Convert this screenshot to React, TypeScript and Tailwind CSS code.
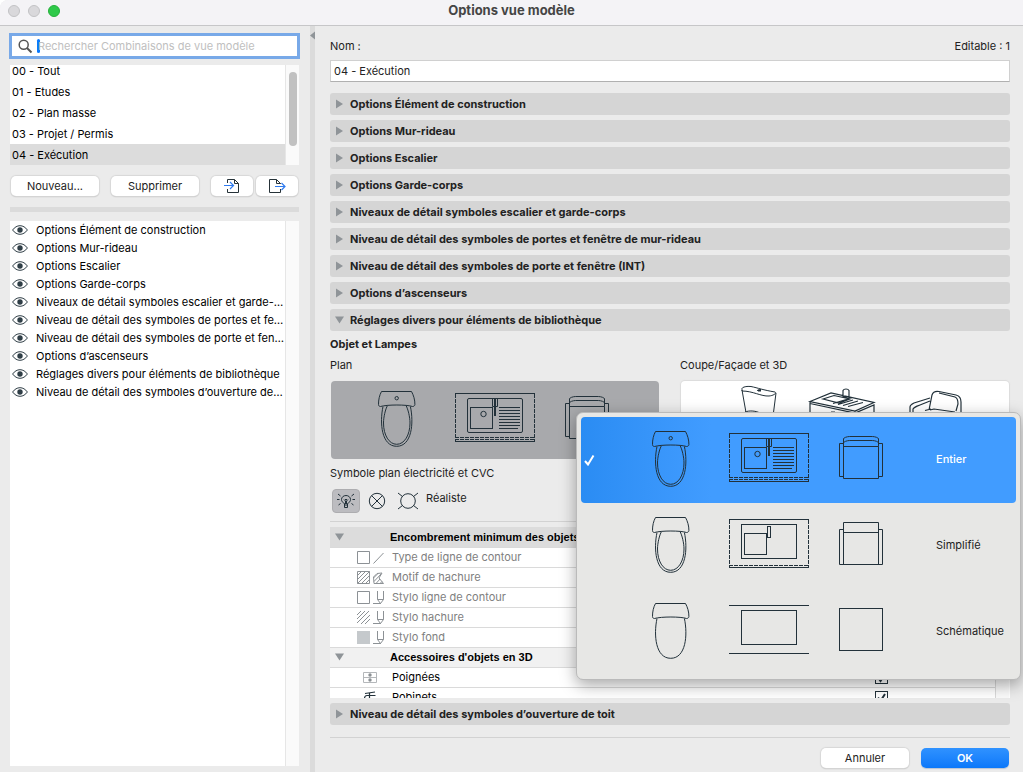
import { useState } from 'react';
import type { ReactNode } from 'react';
import clsx from 'clsx';

type DetailLevel = 'full' | 'simple' | 'schematic';

const COMBINATIONS = ['00 - Tout', '01 - Etudes', '02 - Plan masse', '03 - Projet / Permis', '04 - Exécution'];

const VISIBLE_OPTIONS = [
  'Options Élément de construction',
  'Options Mur-rideau',
  'Options Escalier',
  'Options Garde-corps',
  'Niveaux de détail symboles escalier et garde-…',
  'Niveau de détail des symboles de portes et fe…',
  'Niveau de détail des symboles de porte et fen…',
  'Options d’ascenseurs',
  'Réglages divers pour éléments de bibliothèque',
  'Niveau de détail des symboles d’ouverture de…',
];

const SECTIONS = [
  'Options Élément de construction',
  'Options Mur-rideau',
  'Options Escalier',
  'Options Garde-corps',
  'Niveaux de détail symboles escalier et garde-corps',
  'Niveau de détail des symboles de portes et fenêtre de mur-rideau',
  'Niveau de détail des symboles de porte et fenêtre (INT)',
  'Options d’ascenseurs',
];

const LEVELS: { id: DetailLevel; label: string }[] = [
  { id: 'full', label: 'Entier' },
  { id: 'simple', label: 'Simplifié' },
  { id: 'schematic', label: 'Schématique' },
];

const EyeIcon = () => (
  <svg width="16" height="10" viewBox="0 0 16 10" fill="none" className="shrink-0">
    <path d="M.6 5C2.6 2.2 5.2.7 8 .7S13.400 2.200 15.400 5C13.400 7.800 10.800 9.300 8 9.300S2.600 7.800.6 5Z" stroke="#2f3e46" />
    <circle cx="8" cy="5" r="2.700" fill="#2f3e46" />
  </svg>
);

const ImportIcon = () => (
  <svg width="16" height="16" viewBox="0 0 16 16" fill="none">
    <path d="M3.500 5V1.500H10.500L14.500 5.500V14.500H3.500V11M10.500 1.500V5.500H14.500" stroke="#263238" />
    <path d="M0 7.500H9.500M6 4L9.500 7.500L6 11" stroke="#2f7bf0" strokeWidth="1.200" />
  </svg>
);

const ExportIcon = () => (
  <svg width="18" height="16" viewBox="0 0 18 16" fill="none">
    <path d="M12.500 6V5.500L8.500 1.500H1.500V14.500H12.500V11M8.500 1.500V5.500H12.500" stroke="#263238" />
    <path d="M7 8.500H17M13.500 5L17 8.500L13.500 12" stroke="#2f7bf0" strokeWidth="1.200" />
  </svg>
);

// WC, sink and armchair as seen in plan, at the given level of detail
const PlanSymbols = ({ level }: { level: DetailLevel }) => {
  const full = level === 'full';
  const schematic = level === 'schematic';
  return (
    <svg width="232" height="58" viewBox="0 0 232 58" fill="none" stroke="#22313a" className="shrink-0">
      <path d="M3.500.5H33.500C35.500 4 37 9 36.900 13.500C36.800 15 35.500 15.500 34.500 15.500C29 13.500 9 13.500 2.500 15.500C1.500 15.500.5 15 .5 13.500C.4 9 1.500 4 3.500.5Z" />
      <path d="M5 15.500C1.500 32 3.500 55.300 18.700 55.300C33.900 55.300 35.900 32 32.400 15.500" />
      {!schematic && (
        <path d="M9.500 14.500C7.500 18 5.500 26 5.500 32C5.500 44 11 53.300 18.700 53.300S32 44 32 32C32 26 30 18 28 14.500" />
      )}
      {full && <circle cx="18.700" cy="7.200" r="1.700" />}

      <path d="M77 2.500H157M77 50.500H157" />
      <rect x="89.500" y="7.500" width="55" height="34" rx={full ? 1.500 : 0} />
      {!schematic && (
        <>
          <path d="M77.500 3V50M156.500 3V50" strokeDasharray="4 1" />
          <path d="M77 48.500H157" strokeDasharray="4 1" />
          <rect x="92.500" y="16.500" width="22" height="21" />
        </>
      )}
      {level === 'simple' && <rect x="115.500" y="9.500" width="3" height="11" fill="#e7e7e5" />}
      {full && (
        <>
          <path d="M77 46.500H157" strokeDasharray="4 1" />
          <circle cx="105.500" cy="23" r="2.700" />
          <path d="M114.500 8V15.500H119.500V8" />
          <path d="M117 8V25" strokeWidth="2" />
          <path d="M121 16.500H142M121 19.500H142M121 22.500H142M121 25.500H142M121 28.500H142M121 31.500H142M121 34.500H142M121 37.500H140" />
        </>
      )}

      {full && (
        <>
          <path d="M191.500 12.500H187.500V45.500H191.500M226.500 12.500H230.500V45.500H226.500" />
          <path d="M191.500 15.500H226.500V47.500H191.500V7.500C194 5.500 197 5.500 199 5.500H219C221 5.500 224 5.500 226.500 7.500V15.500M191.500 11.500C194 9.500 197 9.500 199 9.500H219C221 9.500 224 9.500 226.500 11.500" />
        </>
      )}
      {level === 'simple' && (
        <path d="M191.500 12.500H187.500V47.500H230.500V12.500H226.500M191.500 15.500H226.500M191.500 47.500V5.500H226.500V47.500" />
      )}
      {schematic && <rect x="187.500" y="5.500" width="43" height="42" />}
    </svg>
  );
};

const Symbols3D = () => (
  <svg width="328" height="78" viewBox="0 0 328 78" fill="none" stroke="#22313a" className="shrink-0">
    <path d="M61 8.500C60 6 66 5 70 5.500C77 7 82 9 94 11C96 12 93 14.500 88 15C80 15.500 72 10 61 10ZM61 9L65 31.500M95 12L92.500 31.500M64 31C68 29.500 74 29.500 79 32M76 9.500L80 8.500" />
    <path d="M77 9.500H80" strokeWidth="2" />
    <path d="M129 20.500L150 12L193 21.500L174 30ZM129 20.500V60M129 22.500L174 32L193 24V60M174 30V60M142 18L153 14.500L169 18L158 22ZM152 22.500L167 18M157 23.500L172 19M162 24.500L177 20M167 25.500L182 21.500M162 17V9.500C163 7.500 167 7.500 168 9.500V17M159 16H169M150 31H154" strokeWidth="1.200" />
    <path d="M229 32V26C229 24 231 23 233 22L249 17M232 32V28C233 26 236 25 249 20M248 29L251 14C252 11 255 10 258 10.500L275 14C279 15 280 18 280 21V31M249 29L253 28L274 31M258 12L274 16C277 17 277 20 277 23L275 30M244 29.500L250 28" strokeWidth="1.200" />
  </svg>
);

const BulbIcon = () => (
  <svg width="18" height="16" viewBox="0 0 18 16" fill="none" stroke="#22313a">
    <path d="M7.500 12V10.500C5.500 9.500 4.500 8.300 4.500 6.500C4.500 4.200 6.500 2.500 9 2.500S13.500 4.200 13.500 6.500C13.500 8.300 12.500 9.500 10.500 10.500V12M7.500 12H10.500V14.500H7.500ZM7 6.500L8.500 8V11M11 6.500L9.500 8V11M8 6.500H10M1 1L3.500 3M17 1L14.500 3M0 6.500H2.500M18 6.500H15.500M1.500 12L3.500 10.500M16.500 12L14.500 10.500" />
  </svg>
);

const CrossCircleIcon = () => (
  <svg width="18" height="18" viewBox="0 0 18 18" fill="none" stroke="#22313a">
    <circle cx="9" cy="9" r="7.700" />
    <path d="M3.500 3.500L14.500 14.500M14.500 3.500L3.500 14.500" />
  </svg>
);

const CircleRaysIcon = () => (
  <svg width="20" height="18" viewBox="0 0 20 18" fill="none" stroke="#22313a">
    <circle cx="10" cy="9" r="7.300" />
    <path d="M0 1L4.500 4.500M20 1L15.500 4.500M0 17L4.500 13.500M20 17L15.500 13.500" />
  </svg>
);

const PEN = 'M20.500 1V9.500L23.500 13.500L26.500 9.500V1M20.500 9.500H26.500M16 13.500H24';

const ROW_ICONS: Record<string, ReactNode> = {
  line: <path d="M.5 1.500H12.500V13.500H.5ZM16.500 13.500L26.500 3" />,
  pattern: (
    <>
      <path d="M.5 1.500H12.500V13.500H.5ZM.5 5.500L4.500 1.500M.5 9.500L8.500 1.500M.5 13.500L12.500 1.500M4.500 13.500L12.500 5.500M8.500 13.500L12.500 9.500" />
      <path d="M17 13.500L16.500 7L20 3.500L25 3L22 8L26.500 13.500ZM16.500 8L21 3.500M17 11.500L24 4M19 13.500L23 9M23 13.500L25 11.500" />
    </>
  ),
  linePen: <path d={`M.5 1.500H12.500V13.500H.5Z${PEN}`} />,
  hatchPen: <path d={`M0 5L4 1M0 9L8 1M0 13L12 1M4 14L13 5M8 14L13 9${PEN}`} />,
  fillPen: (
    <>
      <rect x="0" y="1" width="13" height="13" fill="#c5c9cc" stroke="none" />
      <path d={PEN} />
    </>
  ),
  handle: (
    <>
      <path d="M6.500 2.500H19.500V12.500H6.500ZM6.500 7.500H19.500" stroke="#b4b7ba" />
      <circle cx="13" cy="5" r="1.700" fill="#8a8f93" stroke="none" />
      <circle cx="13" cy="10" r="1.700" fill="#8a8f93" stroke="none" />
    </>
  ),
  tap: (
    <path
      d="M8 3.500L18 2M12.500 3V6.500M7.500 14V8.500C7.500 7 8.500 5.500 10 5.500H18.500M11.500 14V10.500H18.500M12.500 5.500V10.500M7.500 8.500H18.500"
      stroke="#22313a"
      strokeWidth="1.200"
    />
  ),
};

const RowIcon = ({ name }: { name: string }) => (
  <svg width="28" height="15" viewBox="0 0 28 15" fill="none" stroke="#8c9195" className="ml-[3px] block">
    {ROW_ICONS[name]}
  </svg>
);

const DISABLED_ROWS = [
  { icon: 'line', label: 'Type de ligne de contour' },
  { icon: 'pattern', label: 'Motif de hachure' },
  { icon: 'linePen', label: 'Stylo ligne de contour' },
  { icon: 'hatchPen', label: 'Stylo hachure' },
  { icon: 'fillPen', label: 'Stylo fond' },
];

const ACCESSORY_ROWS = [
  { icon: 'handle', label: 'Poignées' },
  { icon: 'tap', label: 'Robinets' },
];

const Triangle = ({ open = false }: { open?: boolean }) => (
  <svg width="10" height="10" viewBox="0 0 10 10" fill="#8f9498" className="block shrink-0">
    <path d={open ? 'M0 1.500H9L4.500 8.500Z' : 'M1 .5V9.500L8 5Z'} />
  </svg>
);

const Section = ({ title, open = false }: { title: string; open?: boolean }) => (
  <button
    type="button"
    aria-expanded={open}
    className="flex h-[22px] w-full shrink-0 items-center gap-[5px] rounded-[3px] bg-[#d5d5d5] pl-[5px] text-left font-bold text-[#222]"
  >
    <Triangle open={open} />
    {title}
  </button>
);

const PushButton = ({ children, label, className }: { children: ReactNode; label?: string; className: string }) => (
  <button
    type="button"
    aria-label={label}
    className={clsx('flex h-5 items-center justify-center rounded-[5px] bg-white text-[#222] shadow-[0_0_1px_1px_#d8d8d8,0_1px_1px_#b0b0b0]', className)}
  >
    {children}
  </button>
);

const GroupRow = ({ title, className }: { title: string; className: string }) => (
  <tr className={clsx('h-5 border-b border-[#dadada]', className)}>
    <td className="pl-[5px]">
      <button type="button" aria-label={`Replier ${title}`} className="block">
        <Triangle open />
      </button>
    </td>
    <td />
    <th colSpan={2} className="text-left font-[Liberation_Sans,sans-serif] font-bold whitespace-nowrap text-black">
      {title}
    </th>
  </tr>
);

const Sidebar = ({ selected, onSelect }: { selected: string; onSelect: (name: string) => void }) => (
  <aside className="flex w-[310px] shrink-0 flex-col pt-2.5 pr-[11px] pb-1.5 pl-2.5">
    <label className="mx-0.5 flex h-5 shrink-0 items-center bg-white pl-1.5 shadow-[0_0_0_3px_#78a9e8]">
      <svg width="15" height="15" viewBox="0 0 15 15" fill="none" stroke="#555" strokeWidth="1.500" className="shrink-0">
        <circle cx="5.700" cy="5.700" r="4.500" />
        <path d="M9 9L13.500 13.500" strokeWidth="2" />
      </svg>
      <span className="ml-1 h-3.5 w-[3px] shrink-0 rounded-full bg-[#0a7aff]" />
      <input
        type="search"
        aria-label="Rechercher"
        placeholder="Rechercher Combinaisons de vue modèle"
        className="-ml-0.5 min-w-0 flex-1 bg-transparent outline-none placeholder:text-[#c0c0c0]"
      />
    </label>

    <div className="mt-[9px] flex h-[100px] shrink-0 bg-white">
      <ul className="flex flex-1 flex-col justify-end overflow-hidden">
        {COMBINATIONS.map((name) => (
          <li key={name} className="h-[21px] shrink-0">
            <button
              type="button"
              onClick={() => onSelect(name)}
              className={clsx('block h-full w-full pl-0.5 text-left', name === selected && 'bg-[#dcdcdc]')}
            >
              {name}
            </button>
          </li>
        ))}
      </ul>
      <div className="w-3.5 border-l border-[#e6e6e6] bg-[#fafafa] pt-[7px] pl-[3px]">
        <div className="h-[74px] w-2 rounded-full bg-[#c1c1c1]" />
      </div>
    </div>

    <div className="mt-[11px] flex shrink-0 pl-px">
      <PushButton className="w-[88px]">Nouveau...</PushButton>
      <PushButton className="ml-3 w-[88px]">Supprimer</PushButton>
      <PushButton label="Importer" className="ml-3 w-[42px]">
        <ImportIcon />
      </PushButton>
      <PushButton label="Exporter" className="ml-[3px] w-[42px]">
        <ExportIcon />
      </PushButton>
    </div>

    <div className="mt-[11px] h-[5px] shrink-0 bg-[#dbdbdb]" />

    <div className="mt-[9px] flex min-h-0 flex-1 bg-white">
      <ul className="min-w-0 flex-1">
        {VISIBLE_OPTIONS.map((name) => (
          <li key={name} className="flex h-[18px] items-center gap-2 pl-0.5 whitespace-nowrap">
            <EyeIcon />
            {name}
          </li>
        ))}
      </ul>
      <div className="w-3.5 border-l border-[#e6e6e6] bg-[#fafafa]" />
    </div>
  </aside>
);

const LevelMenu = ({ value, onChange }: { value: DetailLevel; onChange: (level: DetailLevel) => void }) => (
  <div
    role="listbox"
    aria-label="Niveau de détail"
    className="w-[445px] rounded-[7px] border border-[#bababa] bg-[#e7e7e5] p-1 shadow-[0_5px_16px_rgba(0,0,0,0.35)]"
  >
    {LEVELS.map(({ id, label }) => (
      <button
        key={id}
        type="button"
        role="option"
        aria-selected={id === value}
        onClick={() => onChange(id)}
        className={clsx(
          'flex h-[86px] w-full items-center rounded-[4px] pl-[3px]',
          id === value ? 'bg-linear-to-r from-[#2a8cf3] to-[#419cff] to-30% font-medium text-white' : 'text-[#222]',
        )}
      >
        <svg width="12" height="12" viewBox="0 0 12 12" fill="none" stroke="#fff" strokeWidth="2" className="mr-14 shrink-0">
          {id === value && <path d="M1 7L4 10.500L9.500 1.500" />}
        </svg>
        <PlanSymbols level={id} />
        <span className="mb-0.5 ml-[52px]">{label}</span>
      </button>
    ))}
  </div>
);

const ObjectTable = () => (
  <div className="mt-[5px] flex min-h-0 flex-1 bg-white">
    <div className="min-w-0 flex-1 overflow-y-auto [scrollbar-width:none]">
      <table className="w-full table-fixed border-collapse">
        <colgroup>
          <col className="w-6" />
          <col className="w-9" />
          <col />
          <col className="w-[120px]" />
        </colgroup>
        <tbody>
          <GroupRow title="Encombrement minimum des objets" className="bg-[#dcdcdc]" />
          {DISABLED_ROWS.map(({ icon, label }) => (
            <tr key={label} className="h-5 border-b border-[#dadada] text-[#808080]">
              <td />
              <td>
                <RowIcon name={icon} />
              </td>
              <td className="pl-0.5">{label}</td>
              <td />
            </tr>
          ))}
          <GroupRow title="Accessoires d'objets en 3D" className="bg-[#f1f1f1]" />
          {ACCESSORY_ROWS.map(({ icon, label }) => (
            <tr key={label} className="h-5 border-b border-[#dadada] text-black">
              <td />
              <td>
                <RowIcon name={icon} />
              </td>
              <td className="pl-0.5">{label}</td>
              <td>
                <span className="grid h-[13px] w-[13px]">
                  <input
                    type="checkbox"
                    defaultChecked
                    aria-label={label}
                    className="peer col-start-1 row-start-1 m-0 appearance-none border border-[#22313a] bg-white"
                  />
                  <svg viewBox="0 0 13 13" fill="none" stroke="#22313a" strokeWidth="2" className="pointer-events-none invisible col-start-1 row-start-1 peer-checked:visible">
                    <path d="M3 6.500L5.500 10L10 3" />
                  </svg>
                </span>
              </td>
            </tr>
          ))}
        </tbody>
      </table>
    </div>
    <div className="mr-px w-3.5 border-l border-[#dadada] bg-[#fafafa]" />
  </div>
);

export default function App() {
  const [combination, setCombination] = useState('04 - Exécution');
  const [level, setLevel] = useState<DetailLevel>('full');

  return (
    <div className="flex h-screen flex-col overflow-hidden rounded-tl-lg bg-[#ebebeb] font-[Inter,sans-serif] text-[11px] leading-4 text-black">
      <header className="relative flex h-[26px] shrink-0 items-start justify-center border-b border-[#c6c6c8] bg-[#f4f3f6] pt-0.5">
        <div className="absolute top-[5px] left-2 flex gap-2">
          <button type="button" aria-label="Fermer" className="h-3 w-3 rounded-full border border-[#c2c2c4] bg-[#d9d8db]" />
          <button type="button" aria-label="Réduire" className="h-3 w-3 rounded-full border border-[#c2c2c4] bg-[#d9d8db]" />
          <button type="button" aria-label="Agrandir" className="h-3 w-3 rounded-full border border-[#25b03b] bg-[#2fc94a]" />
        </div>
        <h1 className="text-[13px] font-bold text-[#454545]">Options vue modèle</h1>
      </header>

      <div className="flex min-h-0 flex-1">
        <Sidebar selected={combination} onSelect={setCombination} />
        <button type="button" aria-label="Replier le panneau" className="flex w-[5px] shrink-0 items-start bg-[#dbdbdb] pt-[5px]">
          <svg width="5" height="9" viewBox="0 0 5 9" fill="#8f9498">
            <path d="M5 .5V8.500L0 4.500Z" />
          </svg>
        </button>

        <main className="flex min-w-0 flex-1 flex-col pt-3 pr-[13px] pb-1 pl-[15px]">
          <div className="flex shrink-0 justify-between text-[#222]">
            <label htmlFor="combination-name">Nom :</label>
            <span>Editable : 1</span>
          </div>
          <input
            id="combination-name"
            value={combination}
            onChange={(e) => setCombination(e.target.value)}
            className="mt-1.5 h-[22px] w-full shrink-0 border border-[#d0d0d0] border-b-[#b0b0b0] bg-white pl-[3px] text-[#222] outline-none"
          />

          <div className="mt-[11px] flex shrink-0 flex-col gap-[5px]">
            {SECTIONS.map((title) => (
              <Section key={title} title={title} />
            ))}
            <Section title="Réglages divers pour éléments de bibliothèque" open />
          </div>

          <h2 className="mt-[5px] shrink-0 font-bold text-[#222]">Objet et Lampes</h2>
          <div className="relative mt-[5px] grid shrink-0 grid-cols-2 gap-5 text-[#222]">
            <div>
              <p>Plan</p>
              <div className="mt-2 px-px">
                <button type="button" aria-label="Plan" className="flex h-[78px] w-full items-center overflow-hidden rounded-[4px] bg-[#a8a9ac] pl-[47px]">
                  <PlanSymbols level={level} />
                </button>
              </div>
            </div>
            <div>
              <p>Coupe/Façade et 3D</p>
              <div className="mt-2 px-px">
                <button type="button" aria-label="Coupe/Façade et 3D" className="flex h-[78px] w-full items-center overflow-hidden rounded-[4px] bg-white shadow-[0_0_1px_1px_#dcdcdc]">
                  <Symbols3D />
                </button>
              </div>
            </div>
            <div className="absolute top-[55px] left-[246px] z-10">
              <LevelMenu value={level} onChange={setLevel} />
            </div>
          </div>

          <p className="mt-1.5 shrink-0 text-[#222]">Symbole plan électricité et CVC</p>
          <div className="mt-2 flex h-6 shrink-0 items-center text-[#222]">
            <button type="button" aria-label="Réaliste" aria-pressed className="ml-0.5 flex h-6 w-7 items-center justify-center rounded-[4px] border border-[#adadb0] bg-[#bcbcc0]">
              <BulbIcon />
            </button>
            <button type="button" aria-label="Symbole croisé" className="ml-2">
              <CrossCircleIcon />
            </button>
            <button type="button" aria-label="Symbole simple" className="ml-3">
              <CircleRaysIcon />
            </button>
            <span className="mb-1.5 ml-2">Réaliste</span>
          </div>
          <hr className="mt-2 shrink-0 border-[#d2d2d2]" />

          <ObjectTable />

          <div className="mt-[5px] shrink-0">
            <Section title="Niveau de détail des symboles d’ouverture de toit" />
          </div>
          <hr className="mt-3 shrink-0 border-[#d2d2d2]" />
          <div className="mt-2.5 mr-px flex shrink-0 justify-end gap-3">
            <PushButton className="w-[88px]">Annuler</PushButton>
            <button type="button" className="h-5 w-[88px] rounded-[5px] bg-linear-to-b from-[#2f92ff] to-[#0a78fa] font-semibold text-white shadow-[0_1px_1px_#b8c4d4]">
              OK
            </button>
          </div>
        </main>
      </div>
    </div>
  );
}
